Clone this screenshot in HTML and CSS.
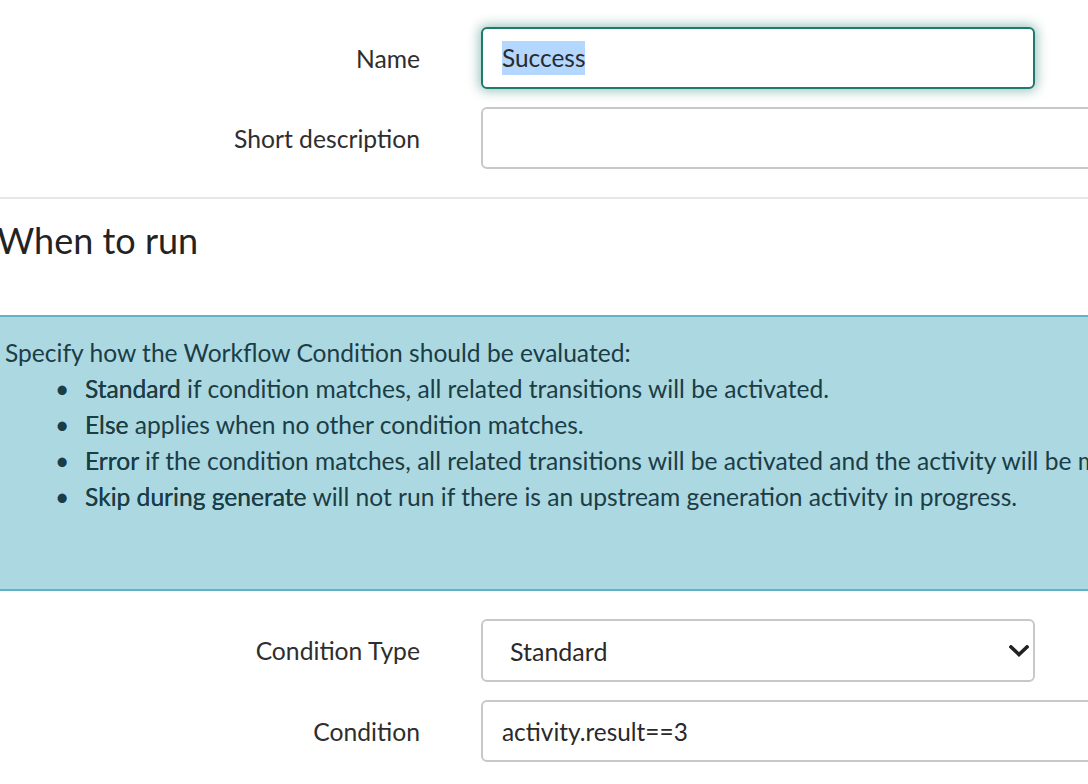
FILE: index.html
```html
<!DOCTYPE html>
<html lang="en">
<head>
<meta charset="utf-8">
<title>Workflow Condition</title>
<link rel="stylesheet" href="styles.css">
</head>
<body>
<div class="page">
  <div class="fields top">
    <div class="row">
      <div class="label">Name</div>
      <div class="control field-short focused"><span class="selected">Success</span></div>
    </div>
    <div class="row">
      <div class="label">Short description</div>
      <div class="control field-long"></div>
    </div>
  </div>
  <hr class="sep">
  <h2 class="section-title">When to run</h2>
  <div class="info">
    <p class="info-lead">Specify how the Workflow Condition should be evaluated:</p>
    <ul class="info-list">
      <li><b>Standard</b> if condition matches, all related transitions will be activated.</li>
      <li><b>Else</b> applies when no other condition matches.</li>
      <li><b>Error</b> if the condition matches, all related transitions will be activated and the activity will be marked as faulted.</li>
      <li><b>Skip during generate</b> will not run if there is an upstream generation activity in progress.</li>
    </ul>
  </div>
  <div class="fields bottom">
    <div class="row">
      <div class="label">Condition Type</div>
      <div class="control field-short select"><span>Standard</span>
        <svg class="chev" width="20" height="12" viewBox="0 0 20 12"><path d="M2 2 L10 9.5 L18 2" fill="none" stroke="#222" stroke-width="3.6" stroke-linecap="square"/></svg>
      </div>
    </div>
    <div class="row">
      <div class="label">Condition</div>
      <div class="control field-long"><span>activity.result==3</span></div>
    </div>
  </div>
</div>
</body>
</html>
```
FILE: styles.css
```css
html, body {
  margin: 0;
  padding: 0;
  background: #ffffff;
  overflow: hidden;
}
body {
  font-family: Lato, "Open Sans", sans-serif;
  color: #2b2b2b;
  width: 1088px;
  height: 784px;
}
.page {
  width: 1088px;
}
.fields.top {
  padding-top: 27px;
}
.row {
  display: grid;
  grid-template-columns: 420px 1fr;
  column-gap: 61px;
  align-items: center;
  margin-bottom: 18px;
}
.label {
  text-align: right;
  font-size: 24.7px;
  color: #2e2e2e;
}
.control {
  box-sizing: border-box;
  height: 62px;
  border: 2px solid #c8c8c8;
  border-radius: 6px;
  padding: 0 19px;
  font-size: 24.4px;
  color: #2a2a2a;
  display: flex;
  align-items: center;
  background: #fff;
}
.field-short {
  width: 554px;
}
.field-long {
  width: 640px;
}
.focused {
  border-color: #1d7b6d;
  box-shadow: 0 0 12px 2px rgba(29, 123, 109, 0.45);
}
.selected {
  background: #b3d7fe;
  line-height: 34px;
}
.select {
  justify-content: space-between;
  padding-left: 27px;
  padding-right: 4px;
  height: 63px;
}
.select span {
  font-size: 25px;
}
.chev {
  display: block;
}
.sep {
  margin: 28px 0 0 0;
  border: 0;
  border-top: 2px solid #e4e6e8;
  height: 0;
}
.section-title {
  margin: 19px 0 0 -3px;
  font-size: 36px;
  font-weight: 400;
  line-height: 44px;
  color: #232323;
}
.info {
  margin: 53px 0 0 -12px;
  background: #acd8e1;
  border-top: 2px solid #5eb4c6;
  border-bottom: 2px solid #5eb4c6;
  padding: 18px 0 74px 17px;
  color: #1b3d46;
  font-size: 24.6px;
  line-height: 36px;
  white-space: nowrap;
}
.info-lead {
  margin: 0;
}
.info-list {
  margin: 0;
  padding-left: 50px;
  list-style: none;
}
.info-list li {
  height: 36px;
}
.info-list li::before {
  content: "\2022";
  display: inline-block;
  width: 30px;
}
.info-list b {
  font-weight: 400;
  text-shadow: 0 0 0.5px #1b3d46;
}
.fields.bottom {
  padding-top: 28px;
}
```
